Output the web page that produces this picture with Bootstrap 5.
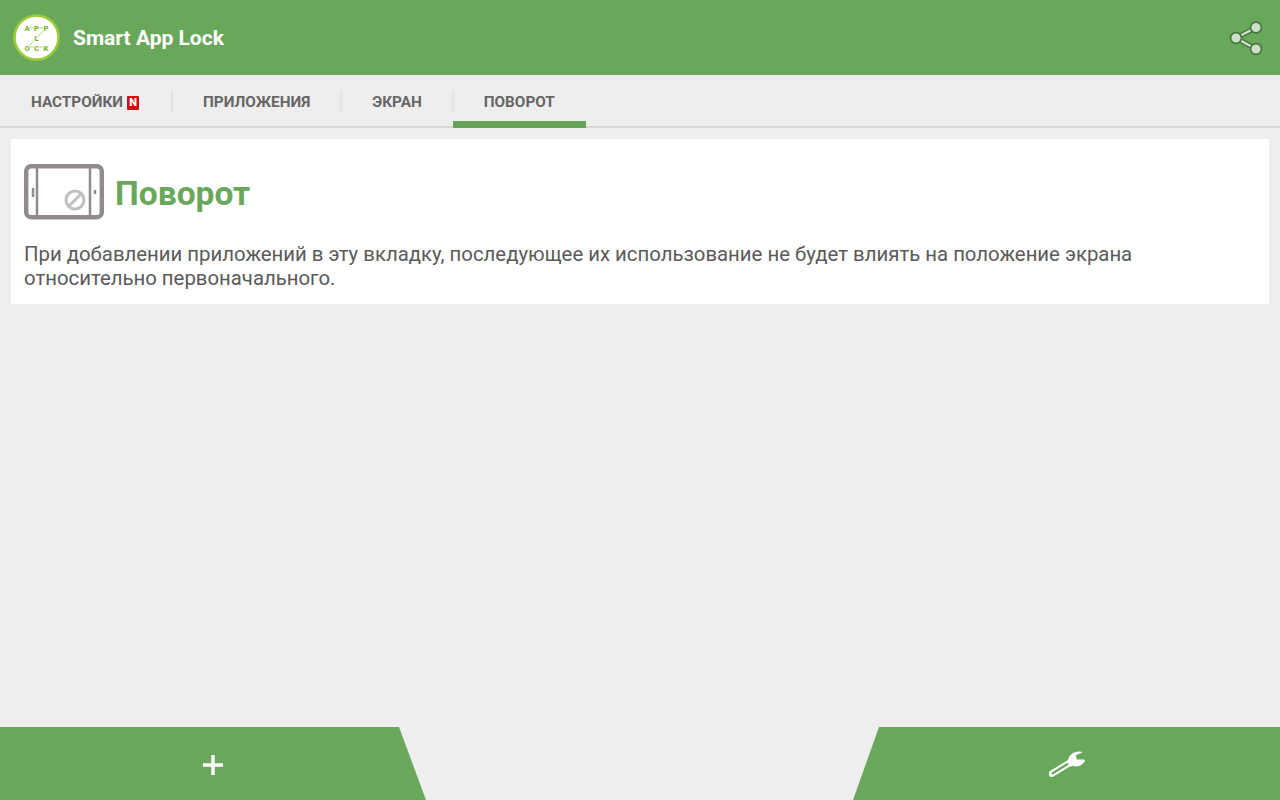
<!DOCTYPE html>
<html lang="ru">
<head>
  <meta charset="UTF-8">
  <title>Smart App Lock</title>
  <link href="https://cdn.jsdelivr.net/npm/bootstrap@5.3.0/dist/css/bootstrap.min.css" rel="stylesheet">
  <style>
    html, body { height: 100%; }
    body { background: #eeeeee; font-family: Roboto, "Liberation Sans", sans-serif; overflow: hidden; }
    .app-shell { height: 800px; }
    .app-bar { height: 75px; background: #69a85b; padding: 0 17px 0 13px; }
    .app-title { font-size: 21px; font-weight: 700; color: #fff; margin-left: 13px; padding-top: 3px; }
    .tab-strip { height: 53px; border-bottom: 2px solid #d8d8d8; }
    .tab-item { height: 53px; padding: 2px 31px 0; font-size: 15.3px; font-weight: 700; color: #666; position: relative; white-space: nowrap; }
    .tab-item + .tab-item::before { content: ""; position: absolute; left: -1px; top: 15px; height: 23px; width: 2px; background: #e3e3e3; }
    .tab-item.is-active::after { content: ""; position: absolute; left: 0; right: 0; bottom: 0; height: 7px; background: #65a457; }
    .new-mark { width: 12px; height: 14px; margin-left: 4px; margin-right: 2px; background: #d40d0d; color: #fff; font-size: 11px; font-weight: 900; line-height: 14px; text-align: center; border-radius: 1px; }
    .info-panel { margin: 11px 11px 0; padding: 25px 13px 13px; background: #fff; height: 165px; }
    .info-title { font-size: 33.6px; font-weight: 700; color: #69a85b; margin: 4px 0 0 11px; line-height: 52px; }
    .info-text { margin: 22px 0 0; font-size: 20.35px; line-height: 24px; color: #5a5a5a; }
    .action-slab { height: 73px; background: #69a85b; }
    .slab-left { width: 426px; clip-path: polygon(0 0, 399px 0, 100% 100%, 0 100%); }
    .slab-right { width: 427px; clip-path: polygon(26px 0, 100% 0, 100% 100%, 0 100%); }
    .slab-plus { margin: 2px 0 0 -1px; }
    .slab-key { margin: 0 0 0 1px; }
  </style>
</head>
<body>
  <div class="app-shell d-flex flex-column">

    <!-- Top bar -->
    <header class="app-bar d-flex align-items-center flex-shrink-0">
      <svg width="47" height="47" viewBox="0 0 47 47">
        <circle cx="23.5" cy="23.5" r="22" fill="#fff" stroke="#9ccb3b" stroke-width="2.6"/>
        <path d="M15 14H33M33 14L15 33H33" fill="none" stroke="#9ccb3b" stroke-width="0.8"/>
        <g font-family="Roboto, sans-serif" font-size="7.5" font-weight="900" fill="#7cb52f" text-anchor="middle" stroke="#fff" stroke-width="1.5" paint-order="stroke">
          <text x="14" y="17">A</text><text x="23.5" y="17">P</text><text x="33" y="17">P</text>
          <text x="23.5" y="26.5">L</text>
          <text x="14" y="36.5">O</text><text x="23.5" y="36.500">C</text><text x="33" y="36.500">K</text>
        </g>
      </svg>
      <span class="app-title">Smart App Lock</span>
      <svg class="ms-auto" width="34" height="36" viewBox="0 0 34 36">
        <path d="M7 18L27 7.500M7 18L27 29" stroke="#47733f" stroke-width="5"/>
        <path d="M7 18L27 7.500M7 18L27 29" stroke="#cfe0c9" stroke-width="2.500"/>
        <g fill="#cfe0c9" stroke="#47733f" stroke-width="1.600">
          <circle cx="27" cy="7.500" r="5.400"/><circle cx="7" cy="18" r="5.400"/><circle cx="27" cy="29" r="5.400"/>
        </g>
      </svg>
    </header>

    <!-- Tabs -->
    <nav class="tab-strip d-flex flex-shrink-0">
      <div class="tab-item d-flex align-items-center">НАСТРОЙКИ<span class="new-mark">N</span></div>
      <div class="tab-item d-flex align-items-center">ПРИЛОЖЕНИЯ</div>
      <div class="tab-item d-flex align-items-center">ЭКРАН</div>
      <div class="tab-item is-active d-flex align-items-center">ПОВОРОТ</div>
    </nav>

    <!-- Content -->
    <main class="info-panel flex-shrink-0">
      <div class="d-flex align-items-start">
        <svg width="80" height="56" viewBox="0 0 80 56">
          <rect x="2.200" y="2.200" width="75.600" height="51" rx="5" fill="none" stroke="#918b8b" stroke-width="4.400"/>
          <path d="M13 3V53M66 3V53" stroke="#918b8b" stroke-width="2.500"/>
          <path d="M9 24V33" stroke="#918b8b" stroke-width="2.500"/>
          <path d="M71 26V30" stroke="#918b8b" stroke-width="2.500"/>
          <circle cx="51" cy="36" r="9" fill="none" stroke="#c2bfbf" stroke-width="3"/>
          <path d="M45 42L57 30" stroke="#c2bfbf" stroke-width="3"/>
        </svg>
        <h1 class="info-title">Поворот</h1>
      </div>
      <p class="info-text">При добавлении приложений в эту вкладку, последующее их использование не будет влиять на положение экрана относительно первоначального.</p>
    </main>

    <!-- Bottom actions -->
    <footer class="d-flex justify-content-between mt-auto flex-shrink-0">
      <div class="action-slab slab-left d-flex align-items-center justify-content-center">
        <svg class="slab-plus" width="22" height="22" viewBox="0 0 22 22"><path d="M11 1V21M1 11H21" stroke="#fff" stroke-width="3.500"/></svg>
      </div>
      <div class="action-slab slab-right d-flex align-items-center justify-content-center">
        <svg class="slab-key" width="37" height="30" viewBox="0 0 40 32">
          <path d="M3 26.500L22 15" stroke="#fff" stroke-width="7" stroke-linecap="round"/>
          <path d="M4 26L21 15.500" stroke="#69a85b" stroke-width="2.500" stroke-linecap="round"/>
          <path d="M20 15C20 8 25 2 34 2.500L36 3.500L29 6.500L30 11L38 11L39 12.500C36 18 30 20 25 18L23 19Z" fill="#fff"/>
        </svg>
      </div>
    </footer>
  </div>

  <script src="https://cdn.jsdelivr.net/npm/bootstrap@5.3.0/dist/js/bootstrap.bundle.min.js"></script>
</body>
</html>
